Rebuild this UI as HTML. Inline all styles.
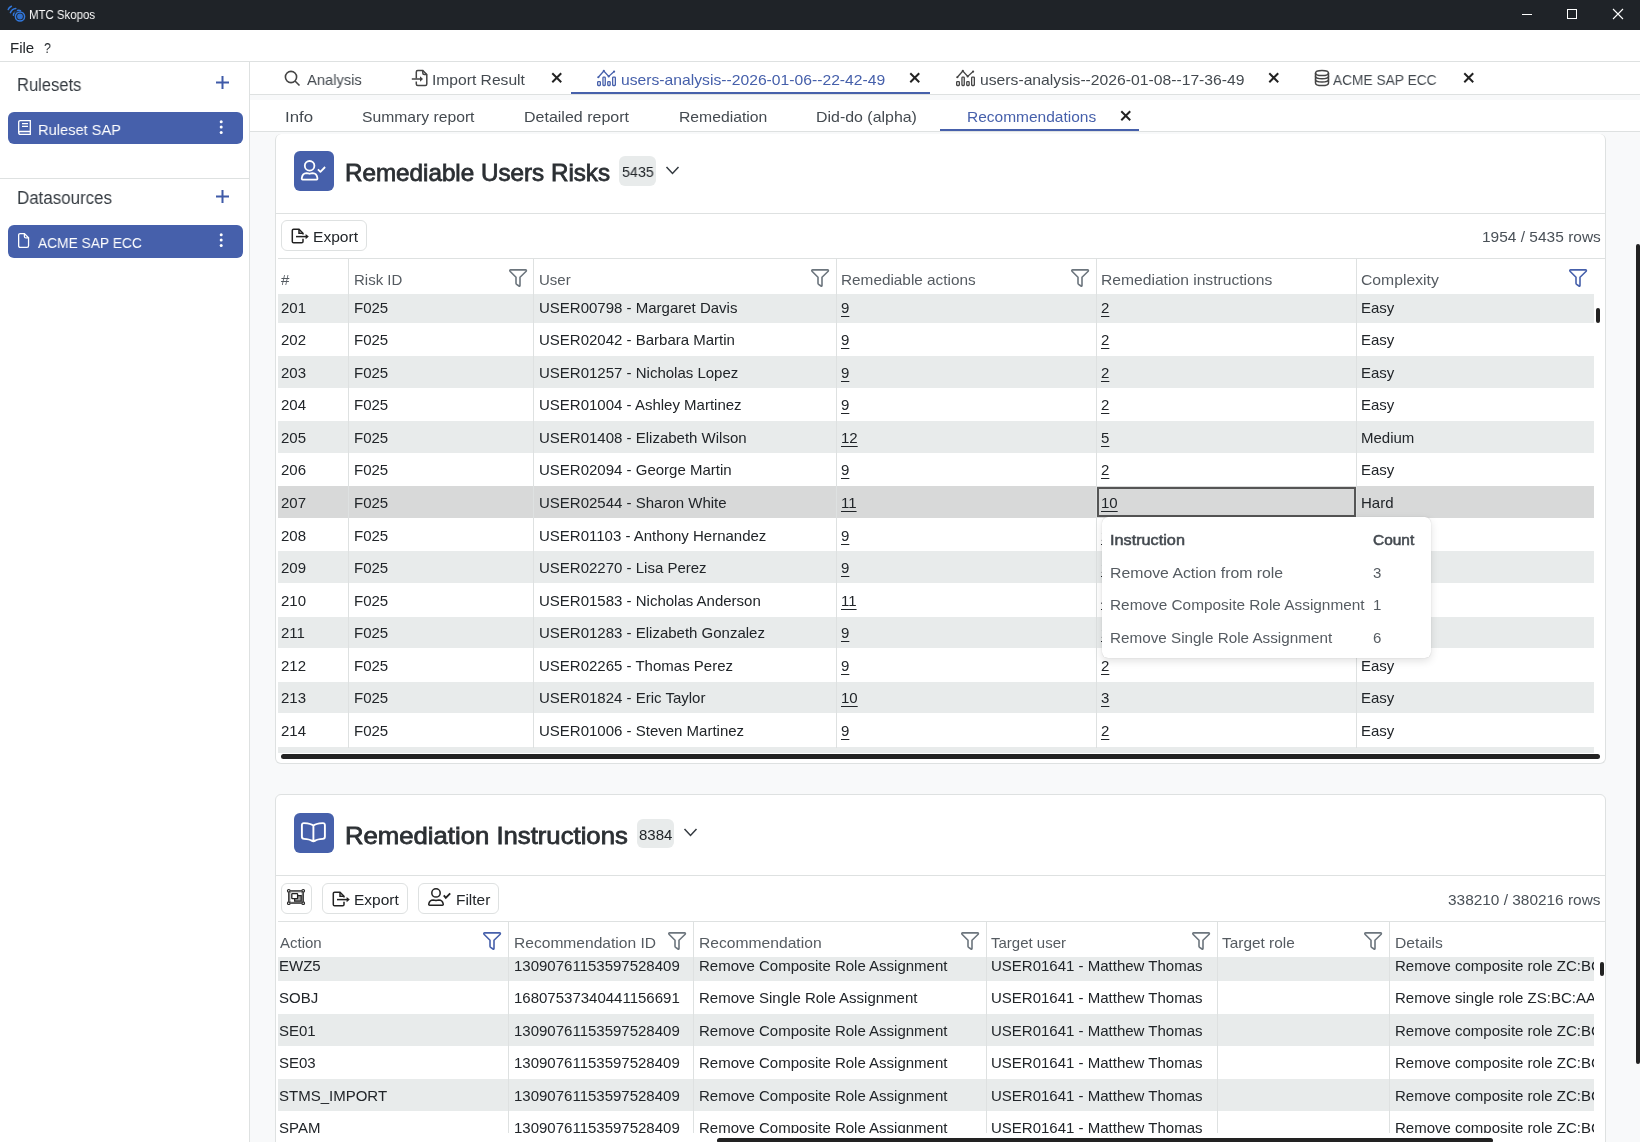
<!DOCTYPE html>
<html><head><meta charset="utf-8"><title>MTC Skopos</title>
<style>
html,body{margin:0;padding:0;width:1640px;height:1142px;overflow:hidden;background:#fff;}
body{position:relative;font-family:"Liberation Sans", sans-serif;}
.t{position:absolute;white-space:nowrap;will-change:transform;}
.b{position:absolute;}
svg.b{overflow:visible;}
</style></head><body>
<div class="b" style="left:0px;top:0px;width:1640px;height:30px;background:#1f2328;"></div><svg class="b" style="left:4px;top:3px;" width="24" height="22" viewBox="0 0 24 22"><g fill="none" stroke="#3278dc" stroke-width="1.5" stroke-linecap="round">
<path d="M4.2 6.6 Q5 4.2 7.4 3.2"/><path d="M6.4 9.6 Q8 6 11.8 5.6"/><path d="M9.4 12.2 Q9.3 11 10.2 10"/><circle cx="16" cy="13.5" r="4.6"/><path d="M13.5 7.5 Q15 7 16.5 7.6" /></g><circle cx="16" cy="13.5" r="2.9" fill="#2f6fcc"/><g fill="#284f86"><circle cx="11" cy="8.8" r="0.7"/><circle cx="12.5" cy="9.3" r="0.7"/><circle cx="10.7" cy="10.6" r="0.6"/></g></svg><div class="t " style="left:29.31px;top:8.50px;font-size:12px;line-height:12px;color:#ffffff;transform:scaleX(0.9529);transform-origin:0 0;">MTC Skopos</div><div class="b" style="left:1522px;top:14px;width:10px;height:1px;background:#ffffff;"></div><div class="b" style="left:1567px;top:9px;width:10px;height:10px;border:1px solid #fff;box-sizing:border-box;"></div><svg class="b" style="left:1612px;top:8px;" width="12" height="12" viewBox="0 0 12 12"><path d="M1 1 L11 11 M11 1 L1 11" stroke="#fff" stroke-width="1.1"/></svg><div class="b" style="left:0px;top:30px;width:1640px;height:31px;background:#ffffff;"></div><div class="t " style="left:9.83px;top:40.25px;font-size:15px;line-height:15px;color:#212529;transform:scaleX(0.9966);transform-origin:0 0;">File</div><div class="t " style="left:43.65px;top:40.25px;font-size:15px;line-height:15px;color:#212529;transform:scaleX(0.8140);transform-origin:0 0;">?</div><div class="b" style="left:0px;top:61px;width:1640px;height:1px;background:#dee1e1;"></div><div class="b" style="left:0px;top:62px;width:249px;height:1080px;background:#ffffff;"></div><div class="b" style="left:249px;top:62px;width:1px;height:1080px;background:#dee1e1;"></div><div class="t " style="left:17.11px;top:77.22px;font-size:17.5px;line-height:17.5px;color:#343a40;transform:scaleX(0.9452);transform-origin:0 0;">Rulesets</div><svg class="b" style="left:215px;top:75px;" width="15" height="15" viewBox="0 0 15 15"><path d="M7.5 1 V14 M1 7.5 H14" stroke="#3f5aa8" stroke-width="2"/></svg><div class="b" style="left:8px;top:112px;width:235px;height:32px;background:#4660ab;border-radius:6px;"></div><svg class="b" style="left:17px;top:119px;" width="15" height="17" viewBox="0 0 15 17"><g fill="none" stroke="#fff" stroke-width="1.3"><path d="M1.7 14 V3.2 Q1.7 1.7 3.2 1.7 H13.3 V15.3 H3.2 Q1.7 15.3 1.7 13.9 Q1.7 12.5 3.2 12.5 H13.3"/><path d="M5 4.6 H11 M5 7.4 H11" stroke-width="1.1"/></g></svg><div class="t " style="left:37.85px;top:122.02px;font-size:15.5px;line-height:15.5px;color:#ffffff;transform:scaleX(0.9446);transform-origin:0 0;">Ruleset SAP</div><svg class="b" style="left:218px;top:119px;" width="6" height="17" viewBox="0 0 6 17"><circle cx="3.2" cy="2.7" r="1.5" fill="#fff"/><circle cx="3.2" cy="8.1" r="1.5" fill="#fff"/><circle cx="3.2" cy="13.5" r="1.5" fill="#fff"/></svg><div class="b" style="left:0px;top:178px;width:249px;height:1px;background:#dee1e1;"></div><div class="t " style="left:17.10px;top:190.32px;font-size:17.5px;line-height:17.5px;color:#343a40;transform:scaleX(0.9662);transform-origin:0 0;">Datasources</div><svg class="b" style="left:215px;top:189px;" width="15" height="15" viewBox="0 0 15 15"><path d="M7.5 1 V14 M1 7.5 H14" stroke="#3f5aa8" stroke-width="2"/></svg><div class="b" style="left:8px;top:225px;width:235px;height:33px;background:#4660ab;border-radius:6px;"></div><svg class="b" style="left:17px;top:233px;" width="14" height="16" viewBox="0 0 14 16"><g fill="none" stroke="#fff" stroke-width="1.3"><path d="M3.2 0.65 H7.4 L11.55 4.8 V12.8 Q11.55 14.35 10 14.35 H3.2 Q1.65 14.35 1.65 12.8 V2.2 Q1.65 0.65 3.2 0.65 Z"/><path d="M7.4 0.65 V3.4 Q7.4 4.9 8.9 4.9 H11.55"/></g></svg><div class="t " style="left:38.00px;top:234.82px;font-size:15.5px;line-height:15.5px;color:#ffffff;transform:scaleX(0.8886);transform-origin:0 0;">ACME SAP ECC</div><svg class="b" style="left:218px;top:232px;" width="6" height="17" viewBox="0 0 6 17"><circle cx="3.2" cy="2.7" r="1.5" fill="#fff"/><circle cx="3.2" cy="8.1" r="1.5" fill="#fff"/><circle cx="3.2" cy="13.5" r="1.5" fill="#fff"/></svg><div class="b" style="left:250px;top:62px;width:1390px;height:32px;background:#ffffff;"></div><div class="b" style="left:250px;top:94px;width:1390px;height:1px;background:#dee1e1;"></div><div class="b" style="left:250px;top:95px;width:1390px;height:5px;background:#f8f9fa;"></div><div class="b" style="left:250px;top:100px;width:1390px;height:31px;background:#ffffff;"></div><div class="b" style="left:250px;top:131px;width:1390px;height:1px;background:#dee1e1;"></div><div class="b" style="left:250px;top:132px;width:1390px;height:1010px;background:#f8f9fa;"></div><svg class="b" style="left:284px;top:70px;" width="17" height="17" viewBox="0 0 17 17"><g fill="none" stroke="#444" stroke-width="1.6"><circle cx="7" cy="7" r="5.6"/><path d="M11 11 L15.5 15.5"/></g></svg><div class="t " style="left:306.60px;top:72.25px;font-size:15px;line-height:15px;color:#444a50;transform:scaleX(0.9824);transform-origin:0 0;">Analysis</div><svg class="b" style="left:411px;top:69px;" width="18" height="18" viewBox="0 0 18 18"><g fill="none" stroke="#444" stroke-width="1.5"><path d="M5.3 9.4 V3 Q5.3 1.5 6.8 1.5 H11.8 L15.8 5.5 V15 Q15.8 16.5 14.3 16.5 H6.8 Q5.3 16.5 5.3 15 V12.4"/><path d="M11.8 1.5 V4 Q11.8 5.5 13.3 5.5 H15.8"/><path d="M0.8 10 H10"/></g><path d="M9 7.3 L12 10 L9 12.7 Z" fill="#444"/></svg><div class="t " style="left:432.37px;top:72.25px;font-size:15px;line-height:15px;color:#444a50;transform:scaleX(1.0416);transform-origin:0 0;">Import Result</div><svg class="b" style="left:552px;top:72.5px;" width="9.5" height="9.5" viewBox="0 0 9.5 9.5"><path d="M1 1 L8.5 8.5 M8.5 1 L1 8.5" stroke="#222" stroke-width="2" stroke-linecap="square"/></svg><svg class="b" style="left:597px;top:69.8px;" width="19" height="17" viewBox="0 0 19 17"><g fill="none" stroke="#4660ab" stroke-width="1.3"><path d="M1.3 7.25 L6.8 0.95 L11.7 6.45 L17.1 1.55"/><rect x="0.65" y="11.6" width="2.7" height="3.9" rx="0.7"/><rect x="5.95" y="7.1" width="2.3" height="8.4" rx="0.7"/><rect x="10.75" y="11.6" width="2.4" height="3.9" rx="0.7"/><rect x="15.65" y="7.1" width="2.7" height="8.4" rx="0.7"/></g><g fill="#4660ab"><circle cx="1.3" cy="7.25" r="1.1"/><circle cx="6.8" cy="0.95" r="1.1"/><circle cx="11.7" cy="6.45" r="1.1"/><circle cx="17.1" cy="1.55" r="1.1"/></g></svg><div class="t " style="left:620.69px;top:72.25px;font-size:15px;line-height:15px;color:#4660ab;transform:scaleX(1.0459);transform-origin:0 0;">users-analysis--2026-01-06--22-42-49</div><svg class="b" style="left:910px;top:72.5px;" width="9.5" height="9.5" viewBox="0 0 9.5 9.5"><path d="M1 1 L8.5 8.5 M8.5 1 L1 8.5" stroke="#222" stroke-width="2" stroke-linecap="square"/></svg><div class="b" style="left:571px;top:92px;width:359px;height:2px;background:#4660ab;"></div><svg class="b" style="left:956px;top:69.8px;" width="19" height="17" viewBox="0 0 19 17"><g fill="none" stroke="#444" stroke-width="1.3"><path d="M1.3 7.25 L6.8 0.95 L11.7 6.45 L17.1 1.55"/><rect x="0.65" y="11.6" width="2.7" height="3.9" rx="0.7"/><rect x="5.95" y="7.1" width="2.3" height="8.4" rx="0.7"/><rect x="10.75" y="11.6" width="2.4" height="3.9" rx="0.7"/><rect x="15.65" y="7.1" width="2.7" height="8.4" rx="0.7"/></g><g fill="#444"><circle cx="1.3" cy="7.25" r="1.1"/><circle cx="6.8" cy="0.95" r="1.1"/><circle cx="11.7" cy="6.45" r="1.1"/><circle cx="17.1" cy="1.55" r="1.1"/></g></svg><div class="t " style="left:979.99px;top:72.25px;font-size:15px;line-height:15px;color:#444a50;transform:scaleX(1.0471);transform-origin:0 0;">users-analysis--2026-01-08--17-36-49</div><svg class="b" style="left:1269px;top:72.5px;" width="9.5" height="9.5" viewBox="0 0 9.5 9.5"><path d="M1 1 L8.5 8.5 M8.5 1 L1 8.5" stroke="#222" stroke-width="2" stroke-linecap="square"/></svg><svg class="b" style="left:1314px;top:69px;" width="16" height="18" viewBox="0 0 16 18"><g fill="none" stroke="#444" stroke-width="1.5"><ellipse cx="8" cy="4" rx="6.5" ry="2.6"/><path d="M1.5 4 V14 Q1.5 16.6 8 16.6 Q14.5 16.6 14.5 14 V4"/><path d="M1.5 7.3 Q1.5 9.8 8 9.8 Q14.5 9.8 14.5 7.3"/><path d="M1.5 10.6 Q1.5 13.1 8 13.1 Q14.5 13.1 14.5 10.6"/></g></svg><div class="t " style="left:1333.00px;top:72.25px;font-size:15px;line-height:15px;color:#444a50;transform:scaleX(0.9156);transform-origin:0 0;">ACME SAP ECC</div><svg class="b" style="left:1464px;top:72.5px;" width="9.5" height="9.5" viewBox="0 0 9.5 9.5"><path d="M1 1 L8.5 8.5 M8.5 1 L1 8.5" stroke="#222" stroke-width="2" stroke-linecap="square"/></svg><div class="t " style="left:285.24px;top:108.85px;font-size:15px;line-height:15px;color:#444a50;transform:scaleX(1.1217);transform-origin:0 0;">Info</div><div class="t " style="left:362.00px;top:108.85px;font-size:15px;line-height:15px;color:#444a50;transform:scaleX(1.0461);transform-origin:0 0;">Summary report</div><div class="t " style="left:524.00px;top:108.85px;font-size:15px;line-height:15px;color:#444a50;transform:scaleX(1.0667);transform-origin:0 0;">Detailed report</div><div class="t " style="left:678.61px;top:108.85px;font-size:15px;line-height:15px;color:#444a50;transform:scaleX(1.0488);transform-origin:0 0;">Remediation</div><div class="t " style="left:816.00px;top:108.85px;font-size:15px;line-height:15px;color:#444a50;transform:scaleX(1.0616);transform-origin:0 0;">Did-do (alpha)</div><div class="t " style="left:967.31px;top:108.85px;font-size:15px;line-height:15px;color:#4660ab;transform:scaleX(1.0329);transform-origin:0 0;">Recommendations</div><svg class="b" style="left:1120.5px;top:111px;" width="9.5" height="9.5" viewBox="0 0 9.5 9.5"><path d="M1 1 L8.5 8.5 M8.5 1 L1 8.5" stroke="#222" stroke-width="2" stroke-linecap="square"/></svg><div class="b" style="left:940px;top:129px;width:199px;height:2px;background:#4660ab;"></div><div class="b" style="left:275px;top:134px;width:1331px;height:630px;background:#ffffff;border:1px solid #dee1e1;border-radius:6px;box-sizing:border-box;border-top-width:0;"></div><div class="b" style="left:275px;top:794px;width:1331px;height:366px;background:#ffffff;border:1px solid #dee1e1;border-radius:6px;box-sizing:border-box;"></div><div class="b" style="left:1636px;top:244px;width:4px;height:820px;background:#222;border-radius:2px;"></div><div class="b" style="left:294px;top:151px;width:40px;height:40px;background:#4660ab;border-radius:6px;"></div><svg class="b" style="left:294px;top:151px;" width="40" height="40" viewBox="0 0 40 40"><g fill="none" stroke="#fff" stroke-width="1.8" stroke-linejoin="round"><circle cx="15.6" cy="14.8" r="4.8"/><path d="M8.6 28.6 Q7.6 28.6 7.8 27 Q8.4 22.3 12.5 22.1 Q14 22.1 15.6 22.8 Q17.2 22.1 18.7 22.1 Q22.8 22.3 23.4 27 Q23.6 28.6 22.6 28.6 Z"/><path d="M23.9 18.3 L26.4 20.8 L31.1 16" stroke-linecap="butt"/></g></svg><div class="t " style="left:345.39px;top:160.60px;font-size:24px;line-height:24px;color:#2b2f33;-webkit-text-stroke:0.8px #2b2f33;transform:scaleX(1.0089);transform-origin:0 0;">Remediable Users Risks</div><div class="b" style="left:619px;top:156px;width:37px;height:30px;background:#e8ebeb;border-radius:6px;"></div><div class="t " style="left:621.62px;top:163.95px;font-size:15px;line-height:15px;color:#212529;transform:scaleX(0.9525);transform-origin:0 0;">5435</div><svg class="b" style="left:665px;top:165px;" width="15" height="10" viewBox="0 0 15 10"><path d="M1.5 2 L7.5 8.5 L13.5 2" fill="none" stroke="#343a40" stroke-width="1.5"/></svg><div class="b" style="left:276px;top:213px;width:1329px;height:1px;background:#dee1e1;"></div><div class="b" style="left:281px;top:220px;width:86px;height:31px;background:#ffffff;border:1px solid #dee1e1;border-radius:6px;box-sizing:border-box;"></div><svg class="b" style="left:291px;top:227.7px;" width="19" height="17" viewBox="0 0 19 17"><g fill="none" stroke="#222" stroke-width="1.5"><path d="M12 10.8 V13.5 Q12 14.8 10.7 14.8 H2.6 Q1.3 14.8 1.3 13.5 V2.6 Q1.3 1.3 2.6 1.3 H8 L12 5.3 V6.6"/><path d="M8 1.3 V5.3 H12"/><path d="M5 8.6 H15.5"/></g><path d="M14.6 5.9 L17.8 8.6 L14.6 11.3 Z" fill="#222"/></svg><div class="t " style="left:313.21px;top:228.75px;font-size:15px;line-height:15px;color:#212529;transform:scaleX(1.0381);transform-origin:0 0;">Export</div><div class="t " style="left:1481.65px;top:228.95px;font-size:15px;line-height:15px;color:#495057;transform:scaleX(1.0326);transform-origin:0 0;">1954 / 5435 rows</div><div class="b" style="left:278px;top:258px;width:1327px;height:1px;background:#dee1e1;"></div><div class="b" style="left:348px;top:259px;width:1px;height:489px;background:#dee1e1;"></div><div class="b" style="left:533px;top:259px;width:1px;height:489px;background:#dee1e1;"></div><div class="b" style="left:836px;top:259px;width:1px;height:489px;background:#dee1e1;"></div><div class="b" style="left:1096px;top:259px;width:1px;height:489px;background:#dee1e1;"></div><div class="b" style="left:1356px;top:259px;width:1px;height:489px;background:#dee1e1;"></div><div class="t " style="left:281.00px;top:272.25px;font-size:15px;line-height:15px;color:#555b61;">#</div><div class="t " style="left:353.62px;top:272.25px;font-size:15px;line-height:15px;color:#555b61;">Risk ID</div><svg class="b" style="left:508.5px;top:268.8px;" width="18" height="18" viewBox="0 0 18 18"><path d="M1.6 0.9 H16.6 Q17.8 0.9 17.2 2.2 L11 8.3 V16.3 Q11 17.6 10 17 L7.6 15.3 Q7 14.9 7 14.2 V8.3 L1 2.2 Q0.4 0.9 1.6 0.9 Z" fill="none" stroke="#6c757d" stroke-width="1.6" stroke-linejoin="round"/></svg><div class="t " style="left:538.96px;top:272.25px;font-size:15px;line-height:15px;color:#555b61;">User</div><svg class="b" style="left:811px;top:269px;" width="18" height="18" viewBox="0 0 18 18"><path d="M1.6 0.9 H16.6 Q17.8 0.9 17.2 2.2 L11 8.3 V16.3 Q11 17.6 10 17 L7.6 15.3 Q7 14.9 7 14.2 V8.3 L1 2.2 Q0.4 0.9 1.6 0.9 Z" fill="none" stroke="#6c757d" stroke-width="1.6" stroke-linejoin="round"/></svg><div class="t " style="left:841.12px;top:272.25px;font-size:15px;line-height:15px;color:#555b61;transform:scaleX(1.0223);transform-origin:0 0;">Remediable actions</div><svg class="b" style="left:1071.2px;top:269px;" width="18" height="18" viewBox="0 0 18 18"><path d="M1.6 0.9 H16.6 Q17.8 0.9 17.2 2.2 L11 8.3 V16.3 Q11 17.6 10 17 L7.6 15.3 Q7 14.9 7 14.2 V8.3 L1 2.2 Q0.4 0.9 1.6 0.9 Z" fill="none" stroke="#6c757d" stroke-width="1.6" stroke-linejoin="round"/></svg><div class="t " style="left:1101.11px;top:272.25px;font-size:15px;line-height:15px;color:#555b61;transform:scaleX(1.0431);transform-origin:0 0;">Remediation instructions</div><div class="t " style="left:1360.76px;top:272.25px;font-size:15px;line-height:15px;color:#555b61;transform:scaleX(1.0494);transform-origin:0 0;">Complexity</div><svg class="b" style="left:1569.2px;top:269px;" width="18" height="18" viewBox="0 0 18 18"><path d="M1.6 0.9 H16.6 Q17.8 0.9 17.2 2.2 L11 8.3 V16.3 Q11 17.6 10 17 L7.6 15.3 Q7 14.9 7 14.2 V8.3 L1 2.2 Q0.4 0.9 1.6 0.9 Z" fill="none" stroke="#4660ab" stroke-width="1.6" stroke-linejoin="round"/></svg><div class="b" style="left:278px;top:294px;width:1316px;height:459px;overflow:hidden;"><div class="b" style="left:0;top:-2.90px;width:1316px;height:31.6px;background:#e8ebeb"></div><div class="t" style="left:3.27px;top:5.75px;font-size:15px;line-height:15px;color:#212529;">201</div><div class="t" style="left:75.62px;top:5.75px;font-size:15px;line-height:15px;color:#212529;">F025</div><div class="t" style="left:260.96px;top:5.75px;font-size:15px;line-height:15px;color:#212529;">USER00798 - Margaret Davis</div><div class="t" style="left:563.27px;top:5.75px;font-size:15px;line-height:15px;color:#212529;text-decoration:underline;text-underline-offset:3px;">9</div><div class="t" style="left:823.28px;top:5.75px;font-size:15px;line-height:15px;color:#212529;text-decoration:underline;text-underline-offset:3px;">2</div><div class="t" style="left:1083.12px;top:5.75px;font-size:15px;line-height:15px;color:#212529;">Easy</div><div class="t" style="left:3.27px;top:38.29px;font-size:15px;line-height:15px;color:#212529;">202</div><div class="t" style="left:75.62px;top:38.29px;font-size:15px;line-height:15px;color:#212529;">F025</div><div class="t" style="left:260.96px;top:38.29px;font-size:15px;line-height:15px;color:#212529;">USER02042 - Barbara Martin</div><div class="t" style="left:563.27px;top:38.29px;font-size:15px;line-height:15px;color:#212529;text-decoration:underline;text-underline-offset:3px;">9</div><div class="t" style="left:823.28px;top:38.29px;font-size:15px;line-height:15px;color:#212529;text-decoration:underline;text-underline-offset:3px;">2</div><div class="t" style="left:1083.12px;top:38.29px;font-size:15px;line-height:15px;color:#212529;">Easy</div><div class="b" style="left:0;top:62.18px;width:1316px;height:31.6px;background:#e8ebeb"></div><div class="t" style="left:3.27px;top:70.83px;font-size:15px;line-height:15px;color:#212529;">203</div><div class="t" style="left:75.62px;top:70.83px;font-size:15px;line-height:15px;color:#212529;">F025</div><div class="t" style="left:260.96px;top:70.83px;font-size:15px;line-height:15px;color:#212529;">USER01257 - Nicholas Lopez</div><div class="t" style="left:563.27px;top:70.83px;font-size:15px;line-height:15px;color:#212529;text-decoration:underline;text-underline-offset:3px;">9</div><div class="t" style="left:823.28px;top:70.83px;font-size:15px;line-height:15px;color:#212529;text-decoration:underline;text-underline-offset:3px;">2</div><div class="t" style="left:1083.12px;top:70.83px;font-size:15px;line-height:15px;color:#212529;">Easy</div><div class="t" style="left:3.27px;top:103.37px;font-size:15px;line-height:15px;color:#212529;">204</div><div class="t" style="left:75.62px;top:103.37px;font-size:15px;line-height:15px;color:#212529;">F025</div><div class="t" style="left:260.96px;top:103.37px;font-size:15px;line-height:15px;color:#212529;">USER01004 - Ashley Martinez</div><div class="t" style="left:563.27px;top:103.37px;font-size:15px;line-height:15px;color:#212529;text-decoration:underline;text-underline-offset:3px;">9</div><div class="t" style="left:823.28px;top:103.37px;font-size:15px;line-height:15px;color:#212529;text-decoration:underline;text-underline-offset:3px;">2</div><div class="t" style="left:1083.12px;top:103.37px;font-size:15px;line-height:15px;color:#212529;">Easy</div><div class="b" style="left:0;top:127.26px;width:1316px;height:31.6px;background:#e8ebeb"></div><div class="t" style="left:3.27px;top:135.91px;font-size:15px;line-height:15px;color:#212529;">205</div><div class="t" style="left:75.62px;top:135.91px;font-size:15px;line-height:15px;color:#212529;">F025</div><div class="t" style="left:260.96px;top:135.91px;font-size:15px;line-height:15px;color:#212529;">USER01408 - Elizabeth Wilson</div><div class="t" style="left:563.16px;top:135.91px;font-size:15px;line-height:15px;color:#212529;text-decoration:underline;text-underline-offset:3px;">12</div><div class="t" style="left:823.31px;top:135.91px;font-size:15px;line-height:15px;color:#212529;text-decoration:underline;text-underline-offset:3px;">5</div><div class="t" style="left:1083.12px;top:135.91px;font-size:15px;line-height:15px;color:#212529;">Medium</div><div class="t" style="left:3.27px;top:168.45px;font-size:15px;line-height:15px;color:#212529;">206</div><div class="t" style="left:75.62px;top:168.45px;font-size:15px;line-height:15px;color:#212529;">F025</div><div class="t" style="left:260.96px;top:168.45px;font-size:15px;line-height:15px;color:#212529;">USER02094 - George Martin</div><div class="t" style="left:563.27px;top:168.45px;font-size:15px;line-height:15px;color:#212529;text-decoration:underline;text-underline-offset:3px;">9</div><div class="t" style="left:823.28px;top:168.45px;font-size:15px;line-height:15px;color:#212529;text-decoration:underline;text-underline-offset:3px;">2</div><div class="t" style="left:1083.12px;top:168.45px;font-size:15px;line-height:15px;color:#212529;">Easy</div><div class="b" style="left:0;top:192.34px;width:1316px;height:31.6px;background:#d8d9d9"></div><div class="t" style="left:3.27px;top:200.99px;font-size:15px;line-height:15px;color:#212529;">207</div><div class="t" style="left:75.62px;top:200.99px;font-size:15px;line-height:15px;color:#212529;">F025</div><div class="t" style="left:260.96px;top:200.99px;font-size:15px;line-height:15px;color:#212529;">USER02544 - Sharon White</div><div class="t" style="left:563.16px;top:200.99px;font-size:15px;line-height:15px;color:#212529;text-decoration:underline;text-underline-offset:3px;">11</div><div class="t" style="left:823.16px;top:200.99px;font-size:15px;line-height:15px;color:#212529;text-decoration:underline;text-underline-offset:3px;">10</div><div class="t" style="left:1083.12px;top:200.99px;font-size:15px;line-height:15px;color:#212529;">Hard</div><div class="t" style="left:3.27px;top:233.53px;font-size:15px;line-height:15px;color:#212529;">208</div><div class="t" style="left:75.62px;top:233.53px;font-size:15px;line-height:15px;color:#212529;">F025</div><div class="t" style="left:260.96px;top:233.53px;font-size:15px;line-height:15px;color:#212529;">USER01103 - Anthony Hernandez</div><div class="t" style="left:563.27px;top:233.53px;font-size:15px;line-height:15px;color:#212529;text-decoration:underline;text-underline-offset:3px;">9</div><div class="t" style="left:823.28px;top:233.53px;font-size:15px;line-height:15px;color:#212529;text-decoration:underline;text-underline-offset:3px;">2</div><div class="t" style="left:1083.12px;top:233.53px;font-size:15px;line-height:15px;color:#212529;">Easy</div><div class="b" style="left:0;top:257.42px;width:1316px;height:31.6px;background:#e8ebeb"></div><div class="t" style="left:3.27px;top:266.07px;font-size:15px;line-height:15px;color:#212529;">209</div><div class="t" style="left:75.62px;top:266.07px;font-size:15px;line-height:15px;color:#212529;">F025</div><div class="t" style="left:260.96px;top:266.07px;font-size:15px;line-height:15px;color:#212529;">USER02270 - Lisa Perez</div><div class="t" style="left:563.27px;top:266.07px;font-size:15px;line-height:15px;color:#212529;text-decoration:underline;text-underline-offset:3px;">9</div><div class="t" style="left:823.28px;top:266.07px;font-size:15px;line-height:15px;color:#212529;text-decoration:underline;text-underline-offset:3px;">2</div><div class="t" style="left:1083.12px;top:266.07px;font-size:15px;line-height:15px;color:#212529;">Easy</div><div class="t" style="left:3.27px;top:298.61px;font-size:15px;line-height:15px;color:#212529;">210</div><div class="t" style="left:75.62px;top:298.61px;font-size:15px;line-height:15px;color:#212529;">F025</div><div class="t" style="left:260.96px;top:298.61px;font-size:15px;line-height:15px;color:#212529;">USER01583 - Nicholas Anderson</div><div class="t" style="left:563.16px;top:298.61px;font-size:15px;line-height:15px;color:#212529;text-decoration:underline;text-underline-offset:3px;">11</div><div class="t" style="left:823.39px;top:298.61px;font-size:15px;line-height:15px;color:#212529;text-decoration:underline;text-underline-offset:3px;">4</div><div class="t" style="left:1083.12px;top:298.61px;font-size:15px;line-height:15px;color:#212529;">Easy</div><div class="b" style="left:0;top:322.50px;width:1316px;height:31.6px;background:#e8ebeb"></div><div class="t" style="left:3.27px;top:331.15px;font-size:15px;line-height:15px;color:#212529;">211</div><div class="t" style="left:75.62px;top:331.15px;font-size:15px;line-height:15px;color:#212529;">F025</div><div class="t" style="left:260.96px;top:331.15px;font-size:15px;line-height:15px;color:#212529;">USER01283 - Elizabeth Gonzalez</div><div class="t" style="left:563.27px;top:331.15px;font-size:15px;line-height:15px;color:#212529;text-decoration:underline;text-underline-offset:3px;">9</div><div class="t" style="left:823.28px;top:331.15px;font-size:15px;line-height:15px;color:#212529;text-decoration:underline;text-underline-offset:3px;">2</div><div class="t" style="left:1083.12px;top:331.15px;font-size:15px;line-height:15px;color:#212529;">Easy</div><div class="t" style="left:3.27px;top:363.69px;font-size:15px;line-height:15px;color:#212529;">212</div><div class="t" style="left:75.62px;top:363.69px;font-size:15px;line-height:15px;color:#212529;">F025</div><div class="t" style="left:260.96px;top:363.69px;font-size:15px;line-height:15px;color:#212529;">USER02265 - Thomas Perez</div><div class="t" style="left:563.27px;top:363.69px;font-size:15px;line-height:15px;color:#212529;text-decoration:underline;text-underline-offset:3px;">9</div><div class="t" style="left:823.28px;top:363.69px;font-size:15px;line-height:15px;color:#212529;text-decoration:underline;text-underline-offset:3px;">2</div><div class="t" style="left:1083.12px;top:363.69px;font-size:15px;line-height:15px;color:#212529;">Easy</div><div class="b" style="left:0;top:387.58px;width:1316px;height:31.6px;background:#e8ebeb"></div><div class="t" style="left:3.27px;top:396.23px;font-size:15px;line-height:15px;color:#212529;">213</div><div class="t" style="left:75.62px;top:396.23px;font-size:15px;line-height:15px;color:#212529;">F025</div><div class="t" style="left:260.96px;top:396.23px;font-size:15px;line-height:15px;color:#212529;">USER01824 - Eric Taylor</div><div class="t" style="left:563.16px;top:396.23px;font-size:15px;line-height:15px;color:#212529;text-decoration:underline;text-underline-offset:3px;">10</div><div class="t" style="left:823.31px;top:396.23px;font-size:15px;line-height:15px;color:#212529;text-decoration:underline;text-underline-offset:3px;">3</div><div class="t" style="left:1083.12px;top:396.23px;font-size:15px;line-height:15px;color:#212529;">Easy</div><div class="t" style="left:3.27px;top:428.77px;font-size:15px;line-height:15px;color:#212529;">214</div><div class="t" style="left:75.62px;top:428.77px;font-size:15px;line-height:15px;color:#212529;">F025</div><div class="t" style="left:260.96px;top:428.77px;font-size:15px;line-height:15px;color:#212529;">USER01006 - Steven Martinez</div><div class="t" style="left:563.27px;top:428.77px;font-size:15px;line-height:15px;color:#212529;text-decoration:underline;text-underline-offset:3px;">9</div><div class="t" style="left:823.28px;top:428.77px;font-size:15px;line-height:15px;color:#212529;text-decoration:underline;text-underline-offset:3px;">2</div><div class="t" style="left:1083.12px;top:428.77px;font-size:15px;line-height:15px;color:#212529;">Easy</div><div class="b" style="left:0;top:452.66px;width:1316px;height:31.6px;background:#e8ebeb"></div><div class="t" style="left:3.27px;top:461.31px;font-size:15px;line-height:15px;color:#212529;">215</div><div class="t" style="left:75.62px;top:461.31px;font-size:15px;line-height:15px;color:#212529;">F025</div><div class="t" style="left:260.96px;top:461.31px;font-size:15px;line-height:15px;color:#212529;">USER01007 - Steven Martinez</div><div class="t" style="left:563.27px;top:461.31px;font-size:15px;line-height:15px;color:#212529;text-decoration:underline;text-underline-offset:3px;">9</div><div class="t" style="left:823.28px;top:461.31px;font-size:15px;line-height:15px;color:#212529;text-decoration:underline;text-underline-offset:3px;">2</div><div class="t" style="left:1083.12px;top:461.31px;font-size:15px;line-height:15px;color:#212529;">Easy</div><div class="b" style="left:70px;top:0;width:1px;height:454px;background:#dee1e1"></div><div class="b" style="left:255px;top:0;width:1px;height:454px;background:#dee1e1"></div><div class="b" style="left:558px;top:0;width:1px;height:454px;background:#dee1e1"></div><div class="b" style="left:818px;top:0;width:1px;height:454px;background:#dee1e1"></div><div class="b" style="left:1078px;top:0;width:1px;height:454px;background:#dee1e1"></div></div><div class="b" style="left:1097px;top:487px;width:259px;height:30px;border:2.5px solid #555;box-sizing:border-box;"></div><div class="b" style="left:1595.5px;top:308px;width:4.5px;height:14.5px;background:#222;border-radius:3px;"></div><div class="b" style="left:281px;top:754px;width:1319px;height:5px;background:#222;border-radius:3px;"></div><div class="b" style="left:1101.5px;top:516.5px;width:329.5px;height:141.0px;background:#ffffff;border-radius:6px;box-shadow:0 3px 8px rgba(0,0,0,0.12), 0 0 1px rgba(0,0,0,0.25);"></div><div class="t " style="left:1110.15px;top:532.25px;font-size:15px;line-height:15px;color:#444a50;-webkit-text-stroke:0.55px #444a50;transform:scaleX(1.0826);transform-origin:0 0;">Instruction</div><div class="t " style="left:1373.37px;top:532.25px;font-size:15px;line-height:15px;color:#444a50;-webkit-text-stroke:0.55px #444a50;transform:scaleX(1.0293);transform-origin:0 0;">Count</div><div class="t " style="left:1109.90px;top:564.95px;font-size:15px;line-height:15px;color:#555b61;transform:scaleX(1.0543);transform-origin:0 0;">Remove Action from role</div><div class="t " style="left:1373.41px;top:564.95px;font-size:15px;line-height:15px;color:#555b61;">3</div><div class="t " style="left:1109.92px;top:597.45px;font-size:15px;line-height:15px;color:#555b61;transform:scaleX(1.0246);transform-origin:0 0;">Remove Composite Role Assignment</div><div class="t " style="left:1373.26px;top:597.45px;font-size:15px;line-height:15px;color:#555b61;">1</div><div class="t " style="left:1109.92px;top:629.95px;font-size:15px;line-height:15px;color:#555b61;transform:scaleX(1.0169);transform-origin:0 0;">Remove Single Role Assignment</div><div class="t " style="left:1373.38px;top:629.95px;font-size:15px;line-height:15px;color:#555b61;">6</div><div class="b" style="left:294px;top:813px;width:40px;height:40px;background:#4660ab;border-radius:6px;"></div><svg class="b" style="left:294px;top:813px;" width="40" height="40" viewBox="0 0 40 40"><g fill="none" stroke="#fff" stroke-width="1.9" stroke-linejoin="round"><path d="M19.4 12.6 Q17.5 10.6 10 10.1 Q7.9 10 7.9 12.2 V23.8 Q7.9 25.8 10 25.9 Q15.5 26.3 17.6 27.6 Q19.4 28.8 21.2 27.6 Q23.3 26.3 28.8 25.9 Q30.9 25.8 30.9 23.8 V12.2 Q30.9 10 28.8 10.1 Q21.3 10.6 19.4 12.6 Z M19.4 12.6 V27.8"/></g></svg><div class="t " style="left:345.36px;top:823.60px;font-size:24px;line-height:24px;color:#2b2f33;-webkit-text-stroke:0.8px #2b2f33;transform:scaleX(1.0706);transform-origin:0 0;">Remediation Instructions</div><div class="b" style="left:637px;top:818.5px;width:37px;height:29.5px;background:#e8ebeb;border-radius:6px;"></div><div class="t " style="left:638.81px;top:826.75px;font-size:15px;line-height:15px;color:#212529;transform:scaleX(0.9891);transform-origin:0 0;">8384</div><svg class="b" style="left:683px;top:827px;" width="15" height="10" viewBox="0 0 15 10"><path d="M1.5 2 L7.5 8.5 L13.5 2" fill="none" stroke="#343a40" stroke-width="1.5"/></svg><div class="b" style="left:276px;top:875px;width:1329px;height:1px;background:#dee1e1;"></div><div class="b" style="left:281px;top:883px;width:31px;height:31px;background:#ffffff;border:1px solid #dee1e1;border-radius:6px;box-sizing:border-box;"></div><svg class="b" style="left:287px;top:889px;" width="18" height="16" viewBox="0 0 18 16"><rect x="2.9" y="2.9" width="12.3" height="10.4" rx="1.6" fill="none" stroke="#8a8a8a" stroke-width="1"/><path d="M7.6 9.6 V12.2 H14.2 V6.6 H10.6" fill="#9a9a9a" stroke="#222" stroke-width="1.2"/><rect x="4.8" y="4.6" width="5.8" height="5" rx="0.6" fill="#fff" stroke="#222" stroke-width="1.3"/><g fill="none" stroke="#222" stroke-width="1.3"><path d="M1.8 3.2 V12.8 M16.2 3.2 V12.8 M3.2 1.8 H14.8 M3.2 14.2 H14.8"/></g><g fill="#fff" stroke="#222" stroke-width="1.2"><circle cx="1.8" cy="1.8" r="1.3"/><circle cx="16.2" cy="1.8" r="1.3"/><circle cx="1.8" cy="14.2" r="1.3"/><circle cx="16.2" cy="14.2" r="1.3"/></g></svg><div class="b" style="left:322px;top:883px;width:86px;height:31px;background:#ffffff;border:1px solid #dee1e1;border-radius:6px;box-sizing:border-box;"></div><svg class="b" style="left:332px;top:890.7px;" width="19" height="17" viewBox="0 0 19 17"><g fill="none" stroke="#222" stroke-width="1.5"><path d="M12 10.8 V13.5 Q12 14.8 10.7 14.8 H2.6 Q1.3 14.8 1.3 13.5 V2.6 Q1.3 1.3 2.6 1.3 H8 L12 5.3 V6.6"/><path d="M8 1.3 V5.3 H12"/><path d="M5 8.6 H15.5"/></g><path d="M14.6 5.9 L17.8 8.6 L14.6 11.3 Z" fill="#222"/></svg><div class="t " style="left:354.21px;top:892.25px;font-size:15px;line-height:15px;color:#212529;transform:scaleX(1.0333);transform-origin:0 0;">Export</div><div class="b" style="left:418px;top:883px;width:81px;height:31px;background:#ffffff;border:1px solid #dee1e1;border-radius:6px;box-sizing:border-box;"></div><svg class="b" style="left:427px;top:888px;" width="24" height="19" viewBox="0 0 24 19"><g fill="none" stroke="#222" stroke-width="1.5" stroke-linejoin="round"><circle cx="9" cy="4.9" r="4.2"/><path d="M2.8 17.25 Q1.5 17.25 1.8 15.8 Q2.5 12 6.2 11.9 Q7.5 11.9 9 12.5 Q10.5 11.9 11.8 11.9 Q15.5 12 16.2 15.8 Q16.5 17.25 15.2 17.25 Z"/><path d="M16.8 7.4 L18.8 9.8 L23.2 5.3" stroke-width="1.9" stroke-linejoin="miter"/></g></svg><div class="t " style="left:456.31px;top:892.25px;font-size:15px;line-height:15px;color:#212529;transform:scaleX(1.0290);transform-origin:0 0;">Filter</div><div class="t " style="left:1448.21px;top:892.25px;font-size:15px;line-height:15px;color:#495057;transform:scaleX(1.0273);transform-origin:0 0;">338210 / 380216 rows</div><div class="b" style="left:278px;top:921px;width:1327px;height:1px;background:#dee1e1;"></div><div class="b" style="left:508px;top:922px;width:1px;height:211px;background:#dee1e1;"></div><div class="b" style="left:693px;top:922px;width:1px;height:211px;background:#dee1e1;"></div><div class="b" style="left:986px;top:922px;width:1px;height:211px;background:#dee1e1;"></div><div class="b" style="left:1217px;top:922px;width:1px;height:211px;background:#dee1e1;"></div><div class="b" style="left:1389px;top:922px;width:1px;height:211px;background:#dee1e1;"></div><div class="t " style="left:279.50px;top:935.35px;font-size:15px;line-height:15px;color:#555b61;">Action</div><svg class="b" style="left:483px;top:932px;" width="18" height="18" viewBox="0 0 18 18"><path d="M1.6 0.9 H16.6 Q17.8 0.9 17.2 2.2 L11 8.3 V16.3 Q11 17.6 10 17 L7.6 15.3 Q7 14.9 7 14.2 V8.3 L1 2.2 Q0.4 0.9 1.6 0.9 Z" fill="none" stroke="#4660ab" stroke-width="1.6" stroke-linejoin="round"/></svg><div class="t " style="left:514.21px;top:935.35px;font-size:15px;line-height:15px;color:#555b61;transform:scaleX(1.0390);transform-origin:0 0;">Recommendation ID</div><svg class="b" style="left:667.7px;top:932px;" width="18" height="18" viewBox="0 0 18 18"><path d="M1.6 0.9 H16.6 Q17.8 0.9 17.2 2.2 L11 8.3 V16.3 Q11 17.6 10 17 L7.6 15.3 Q7 14.9 7 14.2 V8.3 L1 2.2 Q0.4 0.9 1.6 0.9 Z" fill="none" stroke="#6c757d" stroke-width="1.6" stroke-linejoin="round"/></svg><div class="t " style="left:699.31px;top:935.35px;font-size:15px;line-height:15px;color:#555b61;transform:scaleX(1.0427);transform-origin:0 0;">Recommendation</div><svg class="b" style="left:961px;top:932px;" width="18" height="18" viewBox="0 0 18 18"><path d="M1.6 0.9 H16.6 Q17.8 0.9 17.2 2.2 L11 8.3 V16.3 Q11 17.6 10 17 L7.6 15.3 Q7 14.9 7 14.2 V8.3 L1 2.2 Q0.4 0.9 1.6 0.9 Z" fill="none" stroke="#6c757d" stroke-width="1.6" stroke-linejoin="round"/></svg><div class="t " style="left:990.89px;top:935.35px;font-size:15px;line-height:15px;color:#555b61;">Target user</div><svg class="b" style="left:1192px;top:932px;" width="18" height="18" viewBox="0 0 18 18"><path d="M1.6 0.9 H16.6 Q17.8 0.9 17.2 2.2 L11 8.3 V16.3 Q11 17.6 10 17 L7.6 15.3 Q7 14.9 7 14.2 V8.3 L1 2.2 Q0.4 0.9 1.6 0.9 Z" fill="none" stroke="#6c757d" stroke-width="1.6" stroke-linejoin="round"/></svg><div class="t " style="left:1222.38px;top:935.35px;font-size:15px;line-height:15px;color:#555b61;transform:scaleX(1.0275);transform-origin:0 0;">Target role</div><svg class="b" style="left:1364.4px;top:932px;" width="18" height="18" viewBox="0 0 18 18"><path d="M1.6 0.9 H16.6 Q17.8 0.9 17.2 2.2 L11 8.3 V16.3 Q11 17.6 10 17 L7.6 15.3 Q7 14.9 7 14.2 V8.3 L1 2.2 Q0.4 0.9 1.6 0.9 Z" fill="none" stroke="#6c757d" stroke-width="1.6" stroke-linejoin="round"/></svg><div class="t " style="left:1395.01px;top:935.35px;font-size:15px;line-height:15px;color:#555b61;transform:scaleX(1.0448);transform-origin:0 0;">Details</div><div class="b" style="left:278px;top:957px;width:1316px;height:176px;overflow:hidden;"><div class="b" style="left:0;top:-7.90px;width:1316px;height:31.5px;background:#e8ebeb"></div><div class="t" style="left:1.12px;top:0.75px;font-size:15px;line-height:15px;color:#212529;">EWZ5</div><div class="t" style="left:235.66px;top:0.75px;font-size:15px;line-height:15px;color:#212529;">13090761153597528409</div><div class="t" style="left:421.12px;top:0.75px;font-size:15px;line-height:15px;color:#212529;">Remove Composite Role Assignment</div><div class="t" style="left:712.66px;top:0.75px;font-size:15px;line-height:15px;color:#212529;">USER01641 - Matthew Thomas</div><div class="t" style="left:1117.03px;top:0.75px;font-size:15px;line-height:15px;color:#212529;">Remove composite role ZC:BC:ADMIN</div><div class="t" style="left:1.31px;top:33.29px;font-size:15px;line-height:15px;color:#212529;">SOBJ</div><div class="t" style="left:235.66px;top:33.29px;font-size:15px;line-height:15px;color:#212529;">16807537340441156691</div><div class="t" style="left:421.12px;top:33.29px;font-size:15px;line-height:15px;color:#212529;">Remove Single Role Assignment</div><div class="t" style="left:712.66px;top:33.29px;font-size:15px;line-height:15px;color:#212529;">USER01641 - Matthew Thomas</div><div class="t" style="left:1117.03px;top:33.29px;font-size:15px;line-height:15px;color:#212529;">Remove single role ZS:BC:AA:ADMIN</div><div class="b" style="left:0;top:57.18px;width:1316px;height:31.5px;background:#e8ebeb"></div><div class="t" style="left:1.31px;top:65.83px;font-size:15px;line-height:15px;color:#212529;">SE01</div><div class="t" style="left:235.66px;top:65.83px;font-size:15px;line-height:15px;color:#212529;">13090761153597528409</div><div class="t" style="left:421.12px;top:65.83px;font-size:15px;line-height:15px;color:#212529;">Remove Composite Role Assignment</div><div class="t" style="left:712.66px;top:65.83px;font-size:15px;line-height:15px;color:#212529;">USER01641 - Matthew Thomas</div><div class="t" style="left:1117.03px;top:65.83px;font-size:15px;line-height:15px;color:#212529;">Remove composite role ZC:BC:ADMIN</div><div class="t" style="left:1.31px;top:98.37px;font-size:15px;line-height:15px;color:#212529;">SE03</div><div class="t" style="left:235.66px;top:98.37px;font-size:15px;line-height:15px;color:#212529;">13090761153597528409</div><div class="t" style="left:421.12px;top:98.37px;font-size:15px;line-height:15px;color:#212529;">Remove Composite Role Assignment</div><div class="t" style="left:712.66px;top:98.37px;font-size:15px;line-height:15px;color:#212529;">USER01641 - Matthew Thomas</div><div class="t" style="left:1117.03px;top:98.37px;font-size:15px;line-height:15px;color:#212529;">Remove composite role ZC:BC:ADMIN</div><div class="b" style="left:0;top:122.26px;width:1316px;height:31.5px;background:#e8ebeb"></div><div class="t" style="left:1.31px;top:130.91px;font-size:15px;line-height:15px;color:#212529;">STMS_IMPORT</div><div class="t" style="left:235.66px;top:130.91px;font-size:15px;line-height:15px;color:#212529;">13090761153597528409</div><div class="t" style="left:421.12px;top:130.91px;font-size:15px;line-height:15px;color:#212529;">Remove Composite Role Assignment</div><div class="t" style="left:712.66px;top:130.91px;font-size:15px;line-height:15px;color:#212529;">USER01641 - Matthew Thomas</div><div class="t" style="left:1117.03px;top:130.91px;font-size:15px;line-height:15px;color:#212529;">Remove composite role ZC:BC:ADMIN</div><div class="t" style="left:1.31px;top:163.45px;font-size:15px;line-height:15px;color:#212529;">SPAM</div><div class="t" style="left:235.66px;top:163.45px;font-size:15px;line-height:15px;color:#212529;">13090761153597528409</div><div class="t" style="left:421.12px;top:163.45px;font-size:15px;line-height:15px;color:#212529;">Remove Composite Role Assignment</div><div class="t" style="left:712.66px;top:163.45px;font-size:15px;line-height:15px;color:#212529;">USER01641 - Matthew Thomas</div><div class="t" style="left:1117.03px;top:163.45px;font-size:15px;line-height:15px;color:#212529;">Remove composite role ZC:BC:ADMIN</div><div class="b" style="left:230px;top:0;width:1px;height:176px;background:#dee1e1"></div><div class="b" style="left:415px;top:0;width:1px;height:176px;background:#dee1e1"></div><div class="b" style="left:708px;top:0;width:1px;height:176px;background:#dee1e1"></div><div class="b" style="left:939px;top:0;width:1px;height:176px;background:#dee1e1"></div><div class="b" style="left:1111px;top:0;width:1px;height:176px;background:#dee1e1"></div></div><div class="b" style="left:1599.5px;top:961.5px;width:4.5px;height:14.0px;background:#222;border-radius:3px;"></div><div class="b" style="left:717px;top:1138px;width:776px;height:5px;background:#222;border-radius:3px;"></div>
</body></html>
